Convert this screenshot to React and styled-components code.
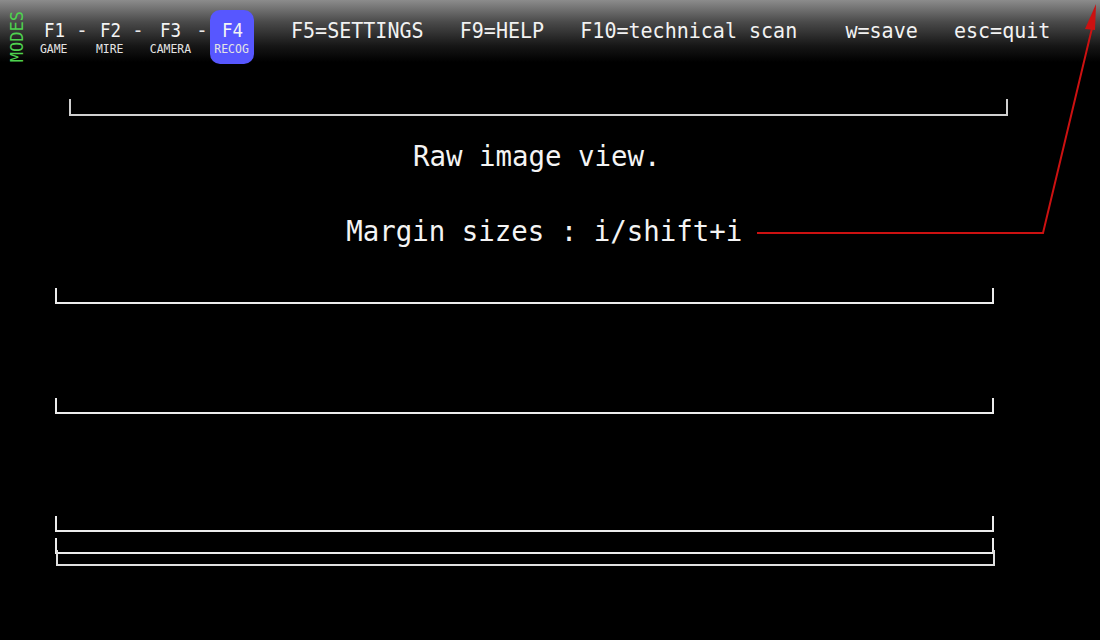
import React from 'react';
import styled, { createGlobalStyle } from 'styled-components';

const GlobalStyle = createGlobalStyle`
  html, body {
    margin: 0;
    padding: 0;
    background: #000;
  }
  body {
    font-family: 'DejaVu Sans Mono', 'Liberation Mono', monospace;
    color: #f2f2f2;
  }
`;

const Screen = styled.div`
  position: relative;
  width: 1100px;
  height: 640px;
  background: #000;
  overflow: hidden;
`;

const Header = styled.div`
  display: flex;
  align-items: flex-start;
  height: 68px;
  background: linear-gradient(to bottom, #8c8c8c 0px, #4a4a4a 22px, #161616 46px, #000 62px);
`;

const ModesTag = styled.div`
  writing-mode: vertical-rl;
  transform: rotate(180deg);
  margin: 11px 0 0 8px;
  width: 18px;
  line-height: 18px;
  font-size: 17px;
  color: #4fd24f;
`;

const ModeGroup = styled.div`
  display: flex;
  margin-left: 8px;
`;

const ModeItem = styled.div`
  display: flex;
  flex-direction: column;
  align-items: center;
  width: ${(props) => props.width}px;
  height: 54px;
  margin-top: 10px;
  border-radius: 10px;
  background: ${(props) => (props.active ? '#5757ff' : 'transparent')};
`;

const ModeKey = styled.span`
  margin-top: 9px;
  font-size: 19px;
  line-height: 22px;
  color: #f4f4f4;
  transform: scaleX(0.92);
`;

const ModeLabel = styled.span`
  margin-top: 1px;
  font-size: 13px;
  line-height: 14px;
  color: #e4e4e4;
  transform: scaleX(0.88);
`;

const Dash = styled.span`
  width: 16px;
  margin-top: 19px;
  text-align: center;
  font-size: 19px;
  line-height: 22px;
  color: #e8e8e8;
`;

const Commands = styled.div`
  margin: 18px 0 0 37px;
  font-size: 22px;
  line-height: 26px;
  white-space: pre;
  color: #f2f2f2;
  transform: scaleX(0.91);
  transform-origin: left center;
`;

const Content = styled.div`
  display: flex;
  flex-direction: column;
`;

const Bracket = styled.div`
  box-sizing: border-box;
  width: 939px;
  height: ${(props) => props.height || 16}px;
  margin-top: ${(props) => props.top}px;
  margin-left: ${(props) => props.left}px;
  border: 2px solid ${(props) => props.color || '#ececec'};
  border-top: none;
`;

const Message = styled.div`
  margin-top: ${(props) => props.top}px;
  padding-right: ${(props) => props.shift}px;
  text-align: center;
  font-size: 29px;
  line-height: 34px;
  white-space: pre;
  color: #f4f4f4;
  transform: scaleX(0.945);
`;

const Pointer = styled.svg`
  position: absolute;
  inset: 0;
  pointer-events: none;
`;

const modes = [
  { key: 'F1', label: 'GAME', width: 40 },
  { key: 'F2', label: 'MIRE', width: 40 },
  { key: 'F3', label: 'CAMERA', width: 48 },
  { key: 'F4', label: 'RECOG', width: 44, active: true },
];

const App = () => {
  return (
    <Screen>
      <GlobalStyle />
      <Header>
        <ModesTag>MODES</ModesTag>
        <ModeGroup>
          {modes.map((mode, i) => (
            <React.Fragment key={mode.key}>
              {i > 0 && <Dash>-</Dash>}
              <ModeItem width={mode.width} active={mode.active}>
                <ModeKey>{mode.key}</ModeKey>
                <ModeLabel>{mode.label}</ModeLabel>
              </ModeItem>
            </React.Fragment>
          ))}
        </ModeGroup>
        <Commands>{'F5=SETTINGS   F9=HELP   F10=technical scan    w=save   esc=quit'}</Commands>
      </Header>

      <Content>
        <Bracket top={31} left={69} height={17} color="#d0d0d0" />
        <Message top={23} shift={28}>Raw image view.</Message>
        <Message top={41} shift={12}>Margin sizes : i/shift+i</Message>
        <Bracket top={40} left={55} />
        <Bracket top={94} left={55} />
        <Bracket top={102} left={55} />
        <Bracket top={6} left={55} />
        <Bracket top={-4} left={56} color="#e0e0e0" />
      </Content>

      <Pointer width="1100" height="640">
        <polyline
          points="757,233 1043,233 1093,24"
          fill="none"
          stroke="#cc1111"
          strokeWidth="2"
        />
        <polygon points="1096,4 1085,29 1095,30" fill="#cc1111" />
      </Pointer>
    </Screen>
  );
};

export default App;
